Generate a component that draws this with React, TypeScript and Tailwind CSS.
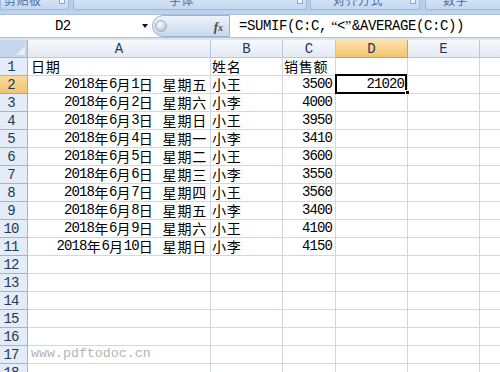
import React from "react";

type Row = { date: string; week: string; name: string; sales: string };

const rows: Row[] = [
  { date: "2018年6月1日", week: "星期五", name: "小王", sales: "3500" },
  { date: "2018年6月2日", week: "星期六", name: "小李", sales: "4000" },
  { date: "2018年6月3日", week: "星期日", name: "小王", sales: "3950" },
  { date: "2018年6月4日", week: "星期一", name: "小李", sales: "3410" },
  { date: "2018年6月5日", week: "星期二", name: "小王", sales: "3600" },
  { date: "2018年6月6日", week: "星期三", name: "小李", sales: "3550" },
  { date: "2018年6月7日", week: "星期四", name: "小王", sales: "3560" },
  { date: "2018年6月8日", week: "星期五", name: "小李", sales: "3400" },
  { date: "2018年6月9日", week: "星期六", name: "小王", sales: "4100" },
  { date: "2018年6月10日", week: "星期日", name: "小李", sales: "4150" },
];

// splits latin and CJK runs so each gets its own font
const Txt = ({ s }: { s: string }) => {
  const parts = s.match(/[\x00-\x7f]+|[^\x00-\x7f]+/g) ?? [];
  return (
    <>
      {parts.map((p, i) =>
        /^[\x00-\x7f]/.test(p) ? (
          <span key={i} className="font-['Liberation_Mono',monospace] text-[14px] tracking-[-0.9px]">
            {p}
          </span>
        ) : (
          <span key={i} className="font-['Noto_Sans_CJK_SC',sans-serif] text-[14px] tracking-[0.8px]">
            {p}
          </span>
        )
      )}
    </>
  );
};

const Group = ({
  w,
  label,
  pl,
}: {
  w: string;
  label: string;
  pl: string;
}) => (
  <div
    className={`${w} relative h-[10px] shrink-0 overflow-hidden rounded-b-[3px] border border-t-0 border-[#9fbbe0] bg-gradient-to-b from-[#d3e2f5] to-[#c3d7f0]`}
  >
    <div
      className={`${pl} mt-[-6px] whitespace-nowrap font-['Noto_Sans_CJK_SC',sans-serif] text-[12px] leading-[12px] tracking-[0.5px] text-[#4a6ea6]`}
    >
      {label}
    </div>
    <div className="absolute right-[3px] top-[-1px] h-[5px] w-[6px] border border-[#8aa8d3] bg-[#eef4fb]" />
  </div>
);

const colW = ["w-[183px]", "w-[72px]", "w-[53px]", "w-[72px]", "w-[72px]"];

export default function App() {
  const letters = ["A", "B", "C", "D", "E"];
  const total = 18;

  return (
    <div className="relative h-[372px] w-[500px] overflow-hidden bg-white">
      {/* ribbon group labels */}
      <div className="flex h-[11px] bg-[#b7cdea]">
        <Group w="w-[69px]" label="剪贴板" pl="pl-[3px]" />
        <div className="w-[4px] shrink-0" />
        <Group w="w-[234px]" label="字体" pl="pl-[95px]" />
        <div className="w-[3px] shrink-0" />
        <Group w="w-[110px]" label="对齐方式" pl="pl-[22px]" />
        <div className="w-[5px] shrink-0" />
        <Group w="w-[90px]" label="数字" pl="pl-[17px]" />
      </div>
      <div className="h-[3px] bg-[#bfd3ee]" />

      {/* formula bar */}
      <div className="flex h-[24px] border-y border-[#a9c0df] bg-white">
        <div className="relative flex w-[152px] shrink-0 items-center">
          <span className="pl-[55px] font-['Liberation_Mono',monospace] text-[14px] tracking-[-0.6px] text-black">
            D2
          </span>
          <svg className="absolute left-[142px] top-[9px]" width="6" height="4" viewBox="0 0 6 4">
            <path d="M0 0 H6 L3 4 Z" fill="#111" />
          </svg>
        </div>
        <div className="relative flex w-[78px] shrink-0 items-center rounded-l-full border-y border-l border-r border-[#9ab4d6] bg-gradient-to-b from-[#eef3fa] via-[#dbe6f4] to-[#c6d7ed]">
          <div className="ml-[2px] h-[12px] w-[12px] rounded-full border border-[#a5b2c2] bg-[radial-gradient(circle_at_40%_35%,#ffffff_0%,#d7dde5_45%,#9eabbb_100%)]" />
          <span className="ml-auto mr-[6px] font-['Liberation_Serif',serif] text-[13px] font-bold italic leading-none text-[#4a4a4a]">
            f<span className="text-[10px]">x</span>
          </span>
        </div>
        <div className="flex flex-1 items-center pl-[9px] font-['Liberation_Mono',monospace] text-[14px] tracking-[-0.4px] text-black">
          <span>=SUMIF(C:C,</span>
          <span className="inline-block w-[10px] text-right font-['Liberation_Serif',serif]">“</span>
          <span>&lt;</span>
          <span className="inline-block w-[7px] font-['Liberation_Serif',serif]">”</span>
          <span>&amp;AVERAGE(C:C))</span>
        </div>
      </div>
      <div className="h-[2px] bg-[#dde7f3]" />

      {/* sheet */}
      <div className="flex h-[18px]">
        <div className="relative w-[28px] shrink-0 border-b border-r border-[#9eb6ce] bg-[#c6d7ec]">
          <svg className="absolute bottom-[2px] right-[2px]" width="9" height="9" viewBox="0 0 9 9">
            <path d="M9 0 V9 H0 Z" fill="#e6edf6" />
          </svg>
        </div>
        {letters.map((l, i) => (
          <div
            key={l}
            className={`${colW[i]} flex shrink-0 items-center justify-center border-b border-r font-['Liberation_Mono',monospace] text-[14px] leading-none ${
              l === "D"
                ? "border-[#f29436] bg-gradient-to-b from-[#fbe2ad] to-[#f4c46c] text-[#1e395b]"
                : "border-[#b8c9de] bg-gradient-to-b from-[#f7f9fc] to-[#e2e9f3] text-[#1e395b]"
            }`}
          >
            {l}
          </div>
        ))}
        <div className="flex-1 border-b border-[#b8c9de] bg-gradient-to-b from-[#f7f9fc] to-[#e2e9f3]" />
      </div>

      {Array.from({ length: total }, (_, idx) => {
        const n = idx + 1;
        const r = n >= 2 && n <= 11 ? rows[n - 2] : null;
        const sel = n === 2;
        const cell = "flex h-full shrink-0 items-end border-b border-r border-[#d0d7e5] pb-[1px] leading-[16px] text-black";
        return (
          <div key={n} className="flex h-[18px]">
            <div
              className={`flex w-[28px] shrink-0 items-center justify-center border-b border-r pr-[5px] font-['Liberation_Mono',monospace] text-[14px] leading-none tracking-[-1px] ${
                sel
                  ? "border-[#f29436] bg-gradient-to-b from-[#f9d99f] to-[#f3c36c] text-[#1e395b]"
                  : "border-[#9eb6ce] bg-[#e4ecf7] text-[#1e395b]"
              }`}
            >
              {n}
            </div>
            <div className={`${colW[0]} ${cell} ${r ? "justify-end pr-[3px]" : "pl-[3px]"}`}>
              {n === 1 && <Txt s="日期" />}
              {r && (
                <>
                  <Txt s={r.date} />
                  <span className="w-[9px]" />
                  <Txt s={r.week} />
                </>
              )}
              {n === 17 && (
                <span className="font-['Liberation_Mono',monospace] text-[13.3px] text-[#b4b4b4]">
                  www.pdftodoc.cn
                </span>
              )}
            </div>
            <div className={`${colW[1]} ${cell} pl-[1px]`}>
              {n === 1 && <Txt s="姓名" />}
              {r && <Txt s={r.name} />}
            </div>
            <div className={`${colW[2]} ${cell} ${r ? "justify-end pr-[3px]" : "pl-[1px]"}`}>
              {n === 1 && <Txt s="销售额" />}
              {r && <Txt s={r.sales} />}
            </div>
            <div className={`${colW[3]} ${cell} relative justify-end pr-[3px]`}>
              {sel && (
                <>
                  <Txt s="21020" />
                  <div className="pointer-events-none absolute bottom-[-1px] left-[-1px] right-0 top-[-2px] border-2 border-black" />
                  <div className="absolute bottom-[-2px] right-[-3px] h-[5px] w-[5px] border border-white bg-black" />
                </>
              )}
            </div>
            <div className={`${colW[4]} ${cell}`} />
            <div className="h-full flex-1 border-b border-[#d0d7e5]" />
          </div>
        );
      })}
    </div>
  );
}
